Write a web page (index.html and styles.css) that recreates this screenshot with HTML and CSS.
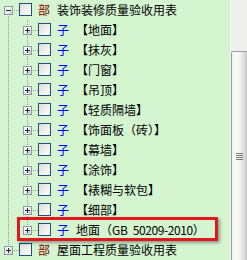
FILE: index.html
```html
<!DOCTYPE html>
<html lang="zh-CN">
<head>
<meta charset="utf-8">
<title>验收用表</title>
<link rel="stylesheet" href="styles.css">
</head>
<body>
<div class="view">
  <ul class="tree">
    <li class="row">
      <span class="cell first"><span class="exp minus"></span></span>
      <span class="chk"></span><span class="tag bu">部</span><span class="txt">装饰装修质量验收用表</span>
    </li>
    <li class="row">
      <span class="cell pipe"></span><span class="cell tee"><span class="exp plus"></span></span>
      <span class="chk"></span><span class="tag zi">子</span><span class="txt">【地面】</span>
    </li>
    <li class="row">
      <span class="cell pipe"></span><span class="cell tee"><span class="exp plus"></span></span>
      <span class="chk"></span><span class="tag zi">子</span><span class="txt">【抹灰】</span>
    </li>
    <li class="row">
      <span class="cell pipe"></span><span class="cell tee"><span class="exp plus"></span></span>
      <span class="chk"></span><span class="tag zi">子</span><span class="txt">【门窗】</span>
    </li>
    <li class="row">
      <span class="cell pipe"></span><span class="cell tee"><span class="exp plus"></span></span>
      <span class="chk"></span><span class="tag zi">子</span><span class="txt">【吊顶】</span>
    </li>
    <li class="row">
      <span class="cell pipe"></span><span class="cell tee"><span class="exp plus"></span></span>
      <span class="chk"></span><span class="tag zi">子</span><span class="txt">【轻质隔墙】</span>
    </li>
    <li class="row">
      <span class="cell pipe"></span><span class="cell tee"><span class="exp plus"></span></span>
      <span class="chk"></span><span class="tag zi">子</span><span class="txt">【饰面板（砖）】</span>
    </li>
    <li class="row">
      <span class="cell pipe"></span><span class="cell tee"><span class="exp plus"></span></span>
      <span class="chk"></span><span class="tag zi">子</span><span class="txt">【幕墙】</span>
    </li>
    <li class="row">
      <span class="cell pipe"></span><span class="cell tee"><span class="exp plus"></span></span>
      <span class="chk"></span><span class="tag zi">子</span><span class="txt">【涂饰】</span>
    </li>
    <li class="row">
      <span class="cell pipe"></span><span class="cell tee"><span class="exp plus"></span></span>
      <span class="chk"></span><span class="tag zi">子</span><span class="txt">【裱糊与软包】</span>
    </li>
    <li class="row">
      <span class="cell pipe"></span><span class="cell tee"><span class="exp plus"></span></span>
      <span class="chk"></span><span class="tag zi">子</span><span class="txt">【细部】</span>
    </li>
    <li class="row hl">
      <span class="cell pipe"></span><span class="cell elbow"><span class="exp plus"></span></span>
      <span class="chk"></span><span class="tag zi">子</span><span class="txt">地面（<span class="code">GB 50209-2010</span>）</span>
    </li>
    <li class="row">
      <span class="cell elbow"><span class="exp plus"></span></span>
      <span class="chk"></span><span class="tag bu">部</span><span class="txt">屋面工程质量验收用表</span>
    </li>
  </ul>
  <div class="scroll">
    <div class="thumb"><span class="grip"></span></div>
  </div>
</div>
</body>
</html>
```
FILE: styles.css
```css
html, body {
  margin: 0;
  padding: 0;
}
body {
  width: 247px;
  height: 260px;
  overflow: hidden;
  background: #d4f5d0;
  font-family: "Noto Sans CJK SC", "Noto Sans", sans-serif;
  font-size: 12px;
  color: #000;
}
.view {
  display: flex;
  width: 247px;
  height: 260px;
  overflow: hidden;
}
.tree {
  list-style: none;
  margin: 0;
  padding: 0;
  width: 230px;
  flex: none;
}
.row {
  display: flex;
  align-items: flex-start;
  height: 20px;
  white-space: nowrap;
}
.cell {
  display: flex;
  align-items: flex-start;
  width: 19px;
  height: 20px;
  flex: none;
}
.pipe {
  background: repeating-linear-gradient(to bottom, #9a9a9a 0 1px, transparent 1px 2px) 8px 0 / 1px 20px no-repeat;
}
.tee {
  background:
    repeating-linear-gradient(to right, #9a9a9a 0 1px, transparent 1px 2px) 8px 10px / 11px 1px no-repeat,
    repeating-linear-gradient(to bottom, #9a9a9a 0 1px, transparent 1px 2px) 8px 0 / 1px 20px no-repeat;
}
.elbow {
  background:
    repeating-linear-gradient(to right, #9a9a9a 0 1px, transparent 1px 2px) 8px 10px / 11px 1px no-repeat,
    repeating-linear-gradient(to bottom, #9a9a9a 0 1px, transparent 1px 2px) 8px 0 / 1px 11px no-repeat;
}
.first {
  background:
    repeating-linear-gradient(to right, #9a9a9a 0 1px, transparent 1px 2px) 8px 10px / 11px 1px no-repeat,
    repeating-linear-gradient(to bottom, #9a9a9a 0 1px, transparent 1px 2px) 8px 10px / 1px 10px no-repeat;
}
.exp {
  box-sizing: border-box;
  width: 9px;
  height: 9px;
  margin: 6px 0 0 4px;
  border: 1px solid #8c9aa6;
}
.plus {
  background:
    linear-gradient(#1a2a44, #1a2a44) center / 5px 1px no-repeat,
    linear-gradient(#1a2a44, #1a2a44) center / 1px 5px no-repeat,
    linear-gradient(135deg, #ffffff 0%, #f4f4f0 45%, #cfcfc6 100%);
}
.minus {
  background:
    linear-gradient(#1a2a44, #1a2a44) center / 5px 1px no-repeat,
    linear-gradient(135deg, #ffffff 0%, #f4f4f0 45%, #cfcfc6 100%);
}
.chk {
  box-sizing: border-box;
  width: 13px;
  height: 13px;
  margin-top: 3px;
  flex: none;
  border: 1px solid #1c5180;
  background: linear-gradient(135deg, #dcdcd7 0%, #f0f0ec 55%, #ffffff 100%);
}
.tag {
  width: 12px;
  margin-left: 6px;
  line-height: 20px;
  flex: none;
}
.bu {
  color: #800000;
}
.zi {
  color: #0000ff;
}
.txt {
  margin-left: 7px;
  line-height: 20px;
}
.code {
  letter-spacing: -0.4px;
  word-spacing: 3px;
}
.hl {
  position: relative;
}
.hl::after {
  content: "";
  position: absolute;
  left: 17px;
  top: -3px;
  width: 201px;
  height: 24px;
  box-sizing: border-box;
  border: 3px solid #e3161d;
  box-shadow: 2px 2px 3px rgba(0, 0, 0, 0.35);
}
.scroll {
  width: 17px;
  height: 260px;
  flex: none;
  box-sizing: border-box;
  border-left: 1px solid #f4f8f4;
  background: #efefed;
  display: flex;
  flex-direction: column;
}
.thumb {
  margin-top: 51px;
  flex: 1;
  border-top: 1px solid #9c9c9c;
  border-left: 1px solid #9c9c9c;
  border-radius: 2px 0 0 0;
  background: linear-gradient(to right, #f2f2f2 0%, #fbfbfb 35%, #e2e2e2 75%, #c6c6c6 100%);
  display: flex;
  justify-content: center;
}
.grip {
  width: 7px;
  height: 7px;
  margin-top: 101px;
  background: repeating-linear-gradient(to bottom, #7a7a7a 0 1px, transparent 1px 2px);
}
```
